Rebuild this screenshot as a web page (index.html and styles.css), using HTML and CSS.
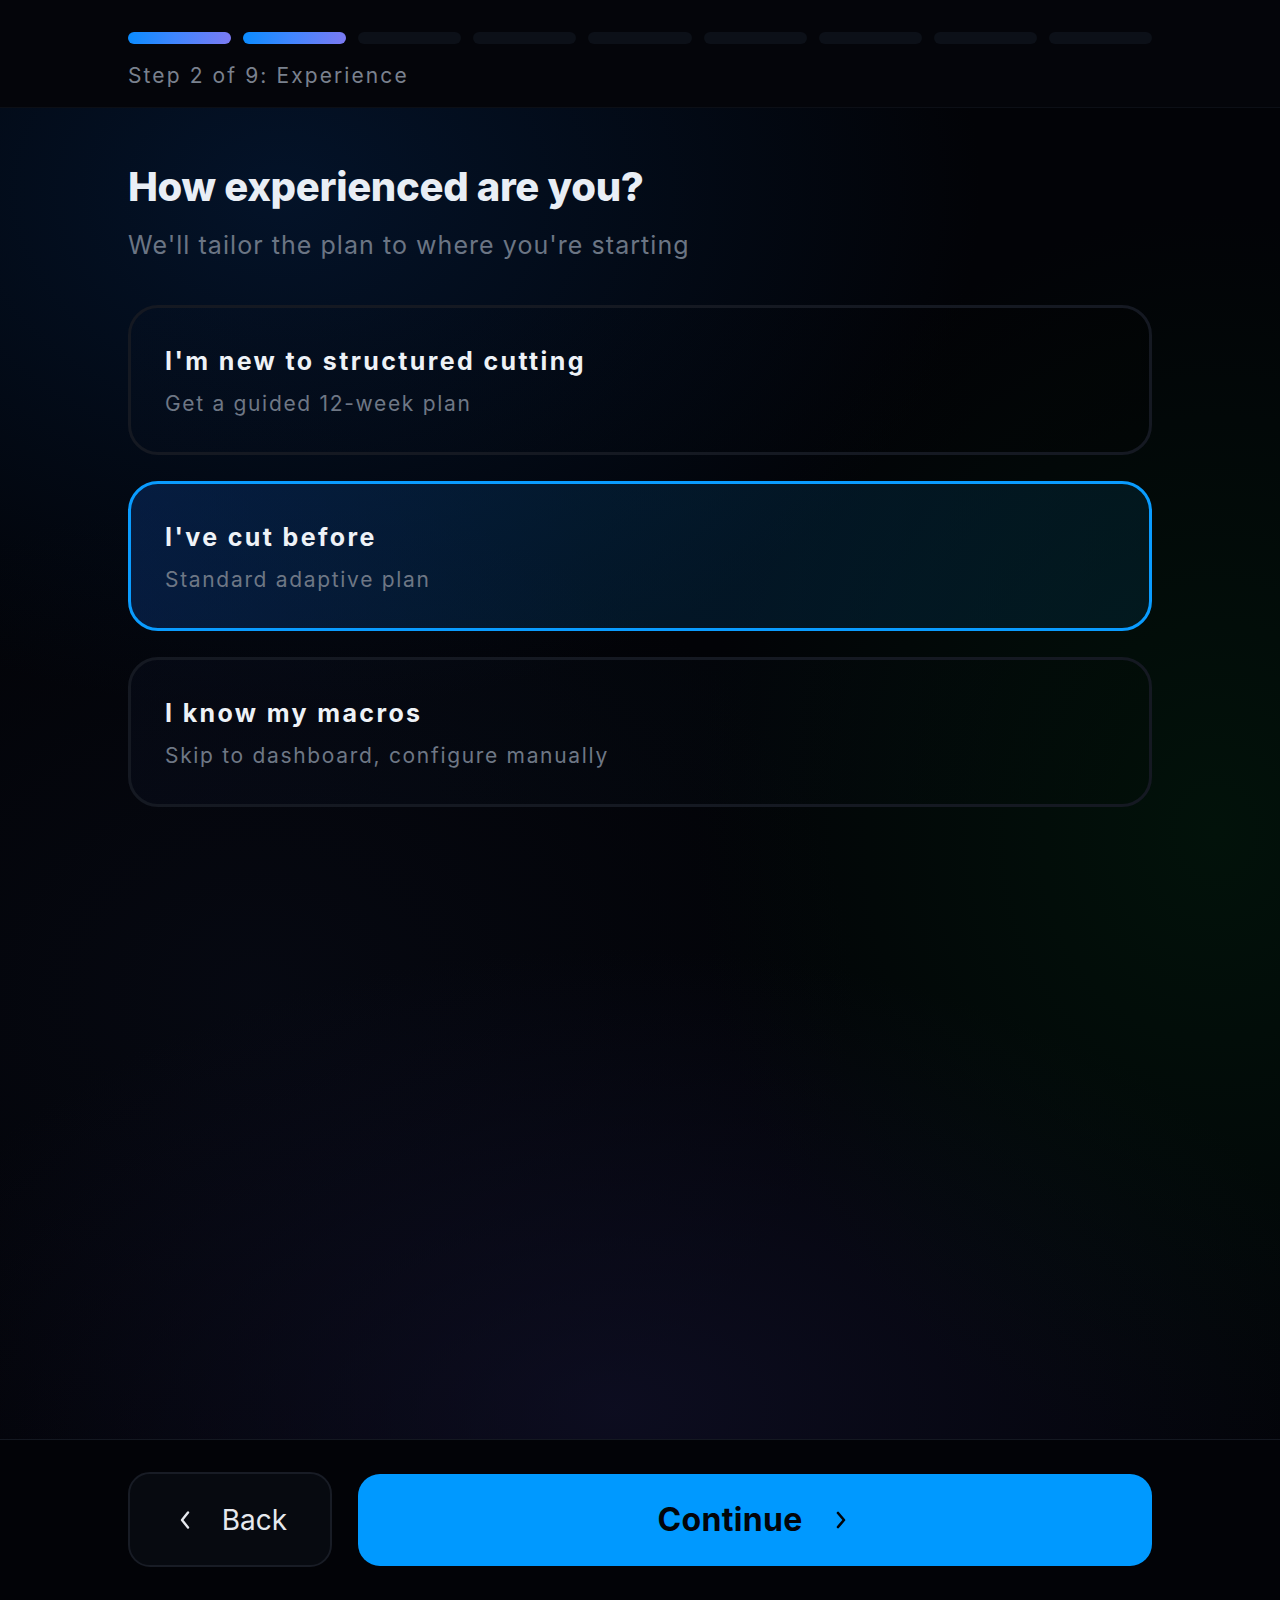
FILE: index.html
```html
<!DOCTYPE html>
<html lang="en">
<head>
<meta charset="utf-8">
<title>Step 2 of 9: Experience</title>
<link rel="stylesheet" href="styles.css">
</head>
<body>
<div class="app">
  <header class="topbar">
    <div class="wrap">
      <div class="progress">
        <span class="seg done"></span>
        <span class="seg done"></span>
        <span class="seg"></span>
        <span class="seg"></span>
        <span class="seg"></span>
        <span class="seg"></span>
        <span class="seg"></span>
        <span class="seg"></span>
        <span class="seg"></span>
      </div>
      <div class="step-label">Step 2 of 9: Experience</div>
    </div>
  </header>

  <main class="main">
    <div class="wrap">
      <h1 class="title">How experienced are you?</h1>
      <p class="subtitle">We'll tailor the plan to where you're starting</p>

      <div class="options">
        <button class="option" type="button">
          <span class="option-title">I'm new to structured cutting</span>
          <span class="option-desc">Get a guided 12-week plan</span>
        </button>
        <button class="option selected" type="button">
          <span class="option-title">I've cut before</span>
          <span class="option-desc">Standard adaptive plan</span>
        </button>
        <button class="option muted" type="button">
          <span class="option-title">I know my macros</span>
          <span class="option-desc">Skip to dashboard, configure manually</span>
        </button>
      </div>
    </div>
  </main>

  <footer class="footer">
    <div class="wrap actions">
      <button class="btn-back" type="button">
        <svg width="24" height="24" viewBox="0 0 24 24" fill="none" stroke="currentColor" stroke-width="2.4" stroke-linecap="round" stroke-linejoin="round"><path d="M15 4.5 L9 12 L15 19.5"/></svg>
        <span>Back</span>
      </button>
      <button class="btn-continue" type="button">
        <span>Continue</span>
        <svg width="24" height="24" viewBox="0 0 24 24" fill="none" stroke="currentColor" stroke-width="2.6" stroke-linecap="round" stroke-linejoin="round"><path d="M9 5 L15 12 L9 19"/></svg>
      </button>
    </div>
  </footer>
</div>
</body>
</html>
```

FILE: styles.css
```css
* { box-sizing: border-box; }

html, body {
  margin: 0;
  padding: 0;
  height: 100%;
}

body {
  background: #020308;
  font-family: Inter, "Noto Sans", "Liberation Sans", sans-serif;
  color: #e9eef5;
}

.app {
  min-height: 1600px;
  display: flex;
  flex-direction: column;
  background:
    radial-gradient(ellipse 700px 520px at 22% 12%, rgba(4, 24, 52, 0.75), rgba(4, 24, 52, 0) 100%),
    radial-gradient(ellipse 520px 620px at 95% 52%, rgba(2, 28, 12, 0.6), rgba(2, 28, 12, 0) 100%),
    radial-gradient(ellipse 760px 460px at 48% 88%, rgba(16, 16, 40, 0.75), rgba(16, 16, 40, 0) 100%),
    radial-gradient(ellipse 600px 500px at 20% 62%, rgba(10, 14, 28, 0.5), rgba(10, 14, 28, 0) 100%),
    #020307;
}

.wrap {
  width: 1024px;
  margin: 0 auto;
}

/* Header */
.topbar {
  background: #04050a;
  border-bottom: 1px solid #0c0f16;
  padding: 32px 0 17px;
}

.progress {
  display: flex;
  gap: 12px;
}

.seg {
  flex: 1;
  height: 12px;
  border-radius: 6px;
  background: #0c1018;
}

.seg.done {
  background: linear-gradient(100deg, #0a8cff 0%, #3f86ff 45%, #7c7af2 100%);
}

.step-label {
  margin-top: 18px;
  font-size: 21px;
  line-height: 28px;
  letter-spacing: 0.1em;
  color: #7a818e;
}

/* Main */
.main {
  flex: 1;
  padding-top: 55px;
}

.title {
  margin: 0;
  font-size: 40px;
  line-height: 48px;
  font-weight: 800;
  letter-spacing: -0.008em;
  color: #e9eef5;
}

.subtitle {
  margin: 18px 0 0;
  font-size: 25px;
  line-height: 32px;
  letter-spacing: 0.042em;
  color: #6b7584;
}

.options {
  margin-top: 44px;
  display: flex;
  flex-direction: column;
  gap: 26px;
}

.option {
  display: flex;
  flex-direction: column;
  align-items: flex-start;
  text-align: left;
  width: 100%;
  height: 150px;
  padding: 37px 34px 0;
  border: 3px solid #151922;
  border-radius: 30px;
  background: linear-gradient(90deg, rgba(10, 20, 40, 0.12), rgba(0, 0, 0, 0.25));
  font-family: inherit;
  cursor: pointer;
}

.option.selected {
  border-color: #0a9cff;
  background: linear-gradient(90deg, rgba(8, 44, 100, 0.55) 0%, rgba(4, 46, 80, 0.45) 45%, rgba(2, 40, 56, 0.45) 100%);
}

.option.muted {
  background: linear-gradient(90deg, rgba(10, 16, 34, 0.35), rgba(0, 10, 4, 0.2));
}

.option-title {
  font-size: 25px;
  line-height: 32px;
  font-weight: 700;
  letter-spacing: 0.095em;
  color: #eef2f7;
}

.option-desc {
  margin-top: 13px;
  font-size: 21px;
  line-height: 28px;
  letter-spacing: 0.08em;
  color: #6e7785;
}

/* Footer */
.footer {
  background: #020307;
  border-top: 1px solid #141821;
  padding: 32px 0 33px;
}

.actions {
  display: flex;
  align-items: center;
  gap: 26px;
}

.btn-back {
  width: 204px;
  height: 95px;
  display: flex;
  align-items: center;
  justify-content: center;
  gap: 25px;
  background: #070a10;
  border: 2px solid #181c25;
  border-radius: 22px;
  color: #e6e9ee;
  font-family: inherit;
  font-size: 28px;
  font-weight: 400;
  cursor: pointer;
}

.btn-continue {
  flex: 1;
  height: 92px;
  display: flex;
  align-items: center;
  justify-content: center;
  gap: 26px;
  background: #0099ff;
  border: none;
  border-radius: 22px;
  color: #02050a;
  font-family: inherit;
  font-size: 32px;
  font-weight: 700;
  letter-spacing: 0.01em;
  cursor: pointer;
}

.btn-back svg, .btn-continue svg {
  flex: none;
}
```
